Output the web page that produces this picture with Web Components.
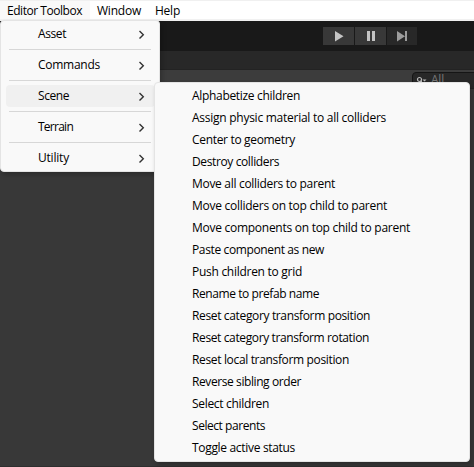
<!DOCTYPE html>
<html lang="en">
<head>
<meta charset="utf-8">
<title>Editor Toolbox</title>
<style>
html, body { margin: 0; height: 100%; overflow: hidden; background: #383838; }
body { font: 12px/22px "Open Sans", "Noto Sans", sans-serif; color: #000; }
</style>
</head>
<body>
<editor-app></editor-app>
<script>
const define = (name, html, setup) => customElements.define(name, class extends HTMLElement {
  connectedCallback() {
    if (this.shadowRoot) return;
    this.attachShadow({ mode: 'open' }).innerHTML = html;
    if (setup) setup(this, this.shadowRoot);
  }
});

// Label whose tracking is fitted to a given advance width.
define('fit-label', `<style>:host{display:block;white-space:nowrap}span{display:inline-block}</style><span></span>`, (el, root) => {
  const s = root.querySelector('span');
  s.textContent = el.getAttribute('text');
  const w = +el.getAttribute('w');
  const n = s.textContent.length;
  s.style.letterSpacing = ((w - s.getBoundingClientRect().width) / n) + 'px';
});

define('menu-bar', `<style>
:host{display:flex;box-sizing:border-box;height:21px;background:#fff;border-top:1px solid #f0f0f0;border-bottom:2px solid #f1f1f1;line-height:20px}
div{padding:0 8px 0 7px}
.open{background:#f9f9f9}
</style>
<div class="open"><fit-label text="Editor Toolbox" w="75"></fit-label></div>
<div><fit-label text="Window" w="44"></fit-label></div>
<div style="padding-left:6px"><fit-label text="Help" w="25"></fit-label></div>`);

define('play-controls', `<style>
:host{display:flex;gap:1px;justify-content:flex-start;box-sizing:border-box;height:30px;background:#191919;padding:6px 0 0 323px}
div{width:31px;height:18px;background:#383838}
div.off{width:30px;background:#282828}
svg{display:block}
</style>
<div><svg width="31" height="18"><path d="M12 4v10.500l8.500-5.250z" fill="#c4c4c4"/></svg></div>
<div><svg width="31" height="18"><path d="M12 4h3v10h-3zM17 4h3v10h-3z" fill="#c4c4c4"/></svg></div>
<div class="off"><svg width="30" height="18"><path d="M10 4v10.500l8-5.250zM18 4h2v10h-2z" fill="#9c9c9c"/></svg></div>`);

define('search-field', `<style>
:host{display:flex;box-sizing:border-box;width:80px;height:18px;flex:none;background:#282828;border:1px solid #151515;border-radius:4px;color:#777;line-height:14px;padding-left:3px;gap:4px}
svg{display:block}
</style>
<svg width="11" height="12"><circle cx="3.500" cy="6.500" r="2" fill="none" stroke="#bbb" stroke-width="1.200"/><path d="M5 8l2 2" stroke="#bbb"/><path d="M6.500 6.500h4l-2 2z" fill="#bbb"/></svg>
<fit-label text="All" w="13"></fit-label>`);

define('editor-shell', `<style>
:host{display:flex;flex-direction:column;height:467px}
.tabs{height:18px;background:#282828;border-bottom:1px solid #232323}
.tools{height:19px;background:#3c3c3c;border-bottom:1px solid #232323;box-sizing:border-box;overflow:hidden;display:flex;padding:2px 0 0 412px}
.body{flex:1;background:#383838;border-bottom:1px solid #2e2e2e}
</style>
<menu-bar></menu-bar><play-controls></play-controls>
<div class="tabs"></div><div class="tools"><search-field></search-field></div><div class="body"></div>`);

define('menu-item', `<style>
:host{display:flex;box-sizing:border-box;height:22px;align-items:flex-start;justify-content:space-between;padding:0 9px 0 32px;margin:0 5px;border-radius:4px}
:host([active]){background:#f0f0f0;margin-right:4px;padding-right:10px}
svg{display:none;margin-top:7px}
:host([sub]) svg{display:block}
</style><slot></slot><svg width="7" height="10"><path d="M1.500 1L5.300 4.800 1.500 8.600" fill="none" stroke="#333" stroke-width="1.400"/></svg>`);

define('menu-line', `<style>:host{display:block;height:1px;margin:4px 8px;background:#d7d7d7}</style>`);

define('menu-panel', `<style>
:host{display:block;position:absolute;box-sizing:border-box;background:#f9f9f9;border:1px solid #e4e4e4;border-radius:4px;box-shadow:2px 3px 5px rgba(0,0,0,.22)}
</style><slot></slot>`);

const groups = [['Asset', 28], ['Commands', 62], ['Scene', 31], ['Terrain', 35], ['Utility', 31]];
const actions = [
  ['Alphabetize children', 108], ['Assign physic material to all colliders', 194],
  ['Center to geometry', 103], ['Destroy colliders', 87], ['Move all colliders to parent', 143],
  ['Move colliders on top child to parent', 195], ['Move components on top child to parent', 218],
  ['Paste component as new', 132], ['Push children to grid', 110], ['Rename to prefab name', 127],
  ['Reset category transform position', 178], ['Reset category transform rotation', 177],
  ['Reset local transform position', 157], ['Reverse sibling order', 109],
  ['Select children', 77], ['Select parents', 73], ['Toggle active status', 103]
];
const item = ([t, w], attrs = '') => `<menu-item ${attrs}><fit-label text="${t}" w="${w}"></fit-label></menu-item>`;

define('editor-app', `<style>
:host{display:block;position:relative;width:474px;height:467px;overflow:hidden}
.first{left:0;top:20px;width:160px;height:152px;padding-top:2px}
.second{left:154px;top:82px;width:316px;height:380px;padding-top:2px}
</style>
<editor-shell></editor-shell>
<menu-panel class="first">${groups.map(g => item(g, g[0] === 'Scene' ? 'sub active' : 'sub')).join('<menu-line></menu-line>')}</menu-panel>
<menu-panel class="second">${actions.map(a => item(a)).join('')}</menu-panel>`);
</script>
</body>
</html>
